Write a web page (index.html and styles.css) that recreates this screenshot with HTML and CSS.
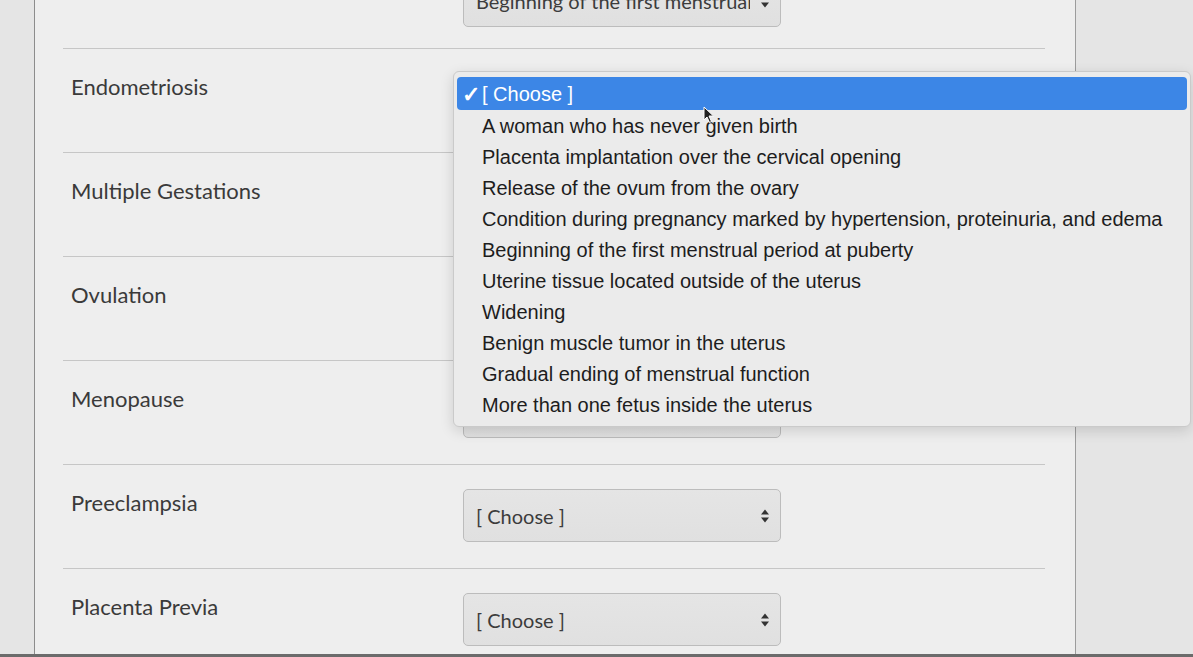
FILE: index.html
```html
<!DOCTYPE html>
<html lang="en">
<head>
  <meta charset="UTF-8" />
  <title>Quiz - Matching</title>
  <meta name="viewport" content="width=device-width, initial-scale=1.0" />
  <link rel="stylesheet" href="styles.css">
</head>
<body>

  <div class="screen">
    <div class="page">
      <div class="matches">

        <!-- previous question, scrolled mostly out of view -->
        <div class="row first">
          <div class="term"></div>
          <div class="pick">
            <div class="select">
              <span class="value">Beginning of the first menstrual period at puberty</span>
              <svg class="arrows" width="10" height="16" viewBox="0 0 10 16"><path d="M1 6.5 5 1.5 9 6.5Z M1 9.5 5 14.5 9 9.5Z" fill="#333"/></svg>
            </div>
          </div>
        </div>

        <div class="row">
          <div class="term">Endometriosis</div>
          <div class="pick">
            <div class="select">
              <span class="value">[ Choose ]</span>
              <svg class="arrows" width="10" height="16" viewBox="0 0 10 16"><path d="M1 6.5 5 1.5 9 6.5Z M1 9.5 5 14.5 9 9.5Z" fill="#333"/></svg>
            </div>
          </div>
        </div>

        <div class="row">
          <div class="term">Multiple Gestations</div>
          <div class="pick">
            <div class="select">
              <span class="value">[ Choose ]</span>
              <svg class="arrows" width="10" height="16" viewBox="0 0 10 16"><path d="M1 6.5 5 1.5 9 6.5Z M1 9.5 5 14.5 9 9.5Z" fill="#333"/></svg>
            </div>
          </div>
        </div>

        <div class="row">
          <div class="term">Ovulation</div>
          <div class="pick">
            <div class="select">
              <span class="value">[ Choose ]</span>
              <svg class="arrows" width="10" height="16" viewBox="0 0 10 16"><path d="M1 6.5 5 1.5 9 6.5Z M1 9.5 5 14.5 9 9.5Z" fill="#333"/></svg>
            </div>
          </div>
        </div>

        <div class="row">
          <div class="term">Menopause</div>
          <div class="pick">
            <div class="select">
              <span class="value">[ Choose ]</span>
              <svg class="arrows" width="10" height="16" viewBox="0 0 10 16"><path d="M1 6.5 5 1.5 9 6.5Z M1 9.5 5 14.5 9 9.5Z" fill="#333"/></svg>
            </div>
          </div>
        </div>

        <div class="row">
          <div class="term">Preeclampsia</div>
          <div class="pick">
            <div class="select">
              <span class="value">[ Choose ]</span>
              <svg class="arrows" width="10" height="16" viewBox="0 0 10 16"><path d="M1 6.5 5 1.5 9 6.5Z M1 9.5 5 14.5 9 9.5Z" fill="#333"/></svg>
            </div>
          </div>
        </div>

        <div class="row">
          <div class="term">Placenta Previa</div>
          <div class="pick">
            <div class="select">
              <span class="value">[ Choose ]</span>
              <svg class="arrows" width="10" height="16" viewBox="0 0 10 16"><path d="M1 6.5 5 1.5 9 6.5Z M1 9.5 5 14.5 9 9.5Z" fill="#333"/></svg>
            </div>
          </div>
        </div>

      </div>
    </div>
  </div>

  <!-- open native select popup -->
  <ul class="menu">
    <li class="on"><span class="check">✓</span>[ Choose ]</li>
    <li>A woman who has never given birth</li>
    <li>Placenta implantation over the cervical opening</li>
    <li>Release of the ovum from the ovary</li>
    <li>Condition during pregnancy marked by hypertension, proteinuria, and edema</li>
    <li>Beginning of the first menstrual period at puberty</li>
    <li>Uterine tissue located outside of the uterus</li>
    <li>Widening</li>
    <li>Benign muscle tumor in the uterus</li>
    <li>Gradual ending of menstrual function</li>
    <li>More than one fetus inside the uterus</li>
  </ul>

  <svg class="cursor" width="12" height="18" viewBox="0 0 12 18"><path d="M1 1 1 14 4 11 6.5 16.5 8.5 15.5 6 10 10.5 10Z" fill="#222" stroke="#fff" stroke-width="1"/></svg>

</body>
</html>
```

FILE: styles.css
```css
html, body {
  margin: 0;
  height: 657px;
  overflow: hidden;
}
body {
  font-family: Lato, "Open Sans", sans-serif;
  background: #e5e5e5;
  color: #333;
  box-sizing: border-box;
  border-bottom: 3px solid #6b6b6b;
}
.screen {
  height: 100%;
}
.page {
  display: flow-root;
  margin-left: 34px;
  width: 1040px;
  height: 100%;
  background: #eeeeee;
  border-left: 1px solid #8c8c8c;
  border-right: 1px solid #9c9c9c;
}
.matches {
  margin: -56px 30px 0 28px;
}
.row {
  display: flex;
  padding: 24px 0 26px;
  border-bottom: 1px solid #c6c6c6;
}
.row.first {
  padding-top: 30px;
  padding-bottom: 21px;
}
.term {
  width: 400px;
  padding: 1px 0 0 8px;
  font-size: 22px;
  line-height: 26px;
  color: #3a3a3a;
  box-sizing: border-box;
}
.select {
  display: flex;
  align-items: center;
  justify-content: space-between;
  width: 318px;
  height: 53px;
  padding: 0 10px 0 12px;
  box-sizing: border-box;
  border: 1px solid #bcbcbc;
  border-radius: 5px;
  background: linear-gradient(#e5e5e5, #e0e0e0);
  font-size: 20px;
  color: #3c3c3c;
}
.select .value {
  white-space: nowrap;
  overflow: hidden;
  margin-right: 10px;
}
.arrows {
  flex-shrink: 0;
}

/* popup list */
.menu {
  position: absolute;
  left: 453px;
  top: 71px;
  width: 730px;
  margin: 0;
  padding: 5px 3px 5px;
  list-style: none;
  background: #ebebeb;
  border: 1px solid #cacaca;
  border-radius: 6px;
  box-shadow: 0 4px 14px rgba(0,0,0,0.14);
  font-family: "Liberation Sans", Arial, sans-serif;
  font-size: 20px;
  color: #1d1d1d;
}
.menu li {
  position: relative;
  height: 31px;
  line-height: 31px;
  padding-left: 25px;
  white-space: nowrap;
}
.menu li.on {
  height: 33px;
  line-height: 35px;
  margin-bottom: 1px;
  background: #3c86e6;
  color: #fff;
  border-radius: 4px;
}
.menu .check {
  position: absolute;
  left: 5px;
  top: 0;
  font-size: 22px;
  font-weight: bold;
}
.cursor {
  position: absolute;
  left: 703px;
  top: 106px;
}
```
